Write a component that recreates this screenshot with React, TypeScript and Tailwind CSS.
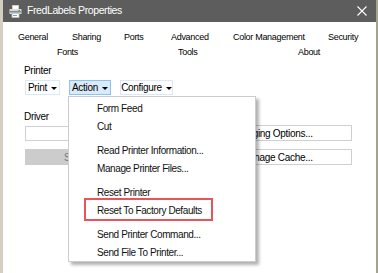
import React from 'react'

// ============================================================================
// DATA
// ============================================================================

const tabRowOne = [
  { label: 'General', width: 'w-[54px]' },
  { label: 'Sharing', width: 'w-[52px]' },
  { label: 'Ports', width: 'w-[47px]' },
  { label: 'Advanced', width: 'w-[62px]' },
  { label: 'Color Management', width: 'w-[95px]' },
  { label: 'Security', width: 'w-[45px]' }
]

type MenuEntry = { label: string; highlight?: boolean } | 'sep'

const menuEntries: MenuEntry[] = [
  { label: 'Form Feed' },
  { label: 'Cut' },
  'sep',
  { label: 'Read Printer Information...' },
  { label: 'Manage Printer Files...' },
  'sep',
  { label: 'Reset Printer' },
  { label: 'Reset To Factory Defaults', highlight: true },
  'sep',
  { label: 'Send Printer Command...' },
  { label: 'Send File To Printer...' }
]

// ============================================================================
// SMALL PIECES
// ============================================================================

function PrinterIcon() {
  return (
    <svg width="13" height="13" viewBox="0 0 13 13">
      <rect x="3.5" y="0.5" width="6" height="4" fill="#ffffff" stroke="#cfcfcf" strokeWidth="1" />
      <rect x="0.5" y="4" width="12" height="5" rx="0.5" fill="#d9d9d9" />
      <rect x="1" y="6" width="11" height="1.5" fill="#8a8a8a" />
      <rect x="9.5" y="5" width="1.5" height="1" fill="#3fae49" />
      <rect x="3" y="8.5" width="7" height="4" fill="#ffffff" stroke="#bdbdbd" strokeWidth="0.8" />
      <rect x="4" y="10" width="4" height="0.8" fill="#3a8fd0" />
    </svg>
  )
}

function DropButton({ label, active = false, width }: { label: string; active?: boolean; width: string }) {
  return (
    <div
      className={`${width} h-[15px] flex items-center justify-center gap-[4px] border ${
        active ? 'bg-[#d9ebfa] border-[#8cc3ec]' : 'bg-white border-[#d8eaf8]'
      }`}
    >
      <span>{label}</span>
      <span className="w-0 h-0 border-l-[3px] border-r-[3px] border-t-[3px] border-l-transparent border-r-transparent border-t-black mt-[1px]" />
    </div>
  )
}

// ============================================================================
// TITLE + TABS
// ============================================================================

function TitleBar() {
  return (
    <div className="h-[22px] bg-[#5d5d5d] flex items-center pl-[6px] pr-[9px] text-white">
      <PrinterIcon />
      <span className="ml-[5px] text-[10.5px] tracking-[-0.4px]">FredLabels Properties</span>
      <svg className="ml-auto" width="10" height="10" viewBox="0 0 10 10">
        <path d="M0.5 0.5 L9.5 9.5 M9.5 0.5 L0.5 9.5" stroke="#ffffff" strokeWidth="1.1" />
      </svg>
    </div>
  )
}

function TabHeader() {
  return (
    <div className="pt-[8px] text-[9px] tracking-[-0.3px] leading-[14px]">
      <div className="flex pl-[15px]">
        {tabRowOne.map((t) => (
          <span key={t.label} className={`${t.width} shrink-0 whitespace-nowrap`}>
            {t.label}
          </span>
        ))}
      </div>
      <div className="flex pl-[54px] mt-[1px]">
        <span className="w-[121px] shrink-0">Fonts</span>
        <span className="w-[120px] shrink-0">Tools</span>
        <span>About</span>
      </div>
    </div>
  )
}

// ============================================================================
// PAGE BODY
// ============================================================================

function PrinterSection() {
  return (
    <div className="pl-[22px] pr-[24px] text-[10px] tracking-[-0.3px]">
      <div className="mt-[6px] h-[12px] leading-[12px] -ml-[1px]">Printer</div>
      <div className="mt-[3px] flex gap-[9px]">
        <DropButton label="Print" width="w-[35px]" />
        <DropButton label="Action" width="w-[42px]" active />
        <DropButton label="Configure" width="w-[53px]" />
      </div>

      <div className="mt-[16px] h-[12px] leading-[12px] -ml-[1px]">Driver</div>
      <div className="mt-[2px] flex items-center">
        <div className="w-[206px] h-[15px] border border-[#d0d0d0] bg-white" />
        <div className="ml-auto w-[117px] h-[16px] border border-[#cfcfcf] bg-white flex items-center pl-[5px] overflow-hidden whitespace-nowrap">
          Paging Options...
        </div>
      </div>
      <div className="mt-[8px] flex items-center">
        <div className="w-[180px] h-[16px] bg-[#cccccc] flex items-center pl-[39px] text-[#777]">Settings</div>
        <div className="ml-auto w-[117px] h-[16px] border border-[#cfcfcf] bg-white flex items-center pl-[5px] overflow-hidden whitespace-nowrap">
          Manage Cache...
        </div>
      </div>
    </div>
  )
}

function ActionMenu() {
  return (
    <div className="absolute left-[65px] top-[96px] w-[188px] h-[166px] bg-white border border-[#cccccc] shadow-[3px_3px_3px_rgba(0,0,0,0.3)] pt-[2px] text-[10px] tracking-[-0.4px]">
      {menuEntries.map((entry, i) =>
        entry === 'sep' ? (
          <div key={i} className="h-[6px]" />
        ) : (
          <div key={i} className="relative h-[18px] flex items-center pl-[28px] text-[#111]">
            {entry.label}
            {entry.highlight && (
              <div className="absolute left-[15px] top-[-3px] w-[129px] h-[23px] border-2 border-[#e9545a]" />
            )}
          </div>
        )
      )}
    </div>
  )
}

// ============================================================================
// APP
// ============================================================================

export default function App() {
  return (
    <div className="flex w-[378px] h-[273px] overflow-hidden bg-white text-black font-['Liberation_Sans',Arial,sans-serif]">
      <div className="w-[3px] shrink-0 bg-[#d3d0c3]" />
      <div className="relative flex-1 flex flex-col bg-white">
        <TitleBar />
        <TabHeader />
        <PrinterSection />
        <ActionMenu />
      </div>
      <div className="w-[2px] shrink-0 bg-[#a5a48a]" />
    </div>
  )
}
